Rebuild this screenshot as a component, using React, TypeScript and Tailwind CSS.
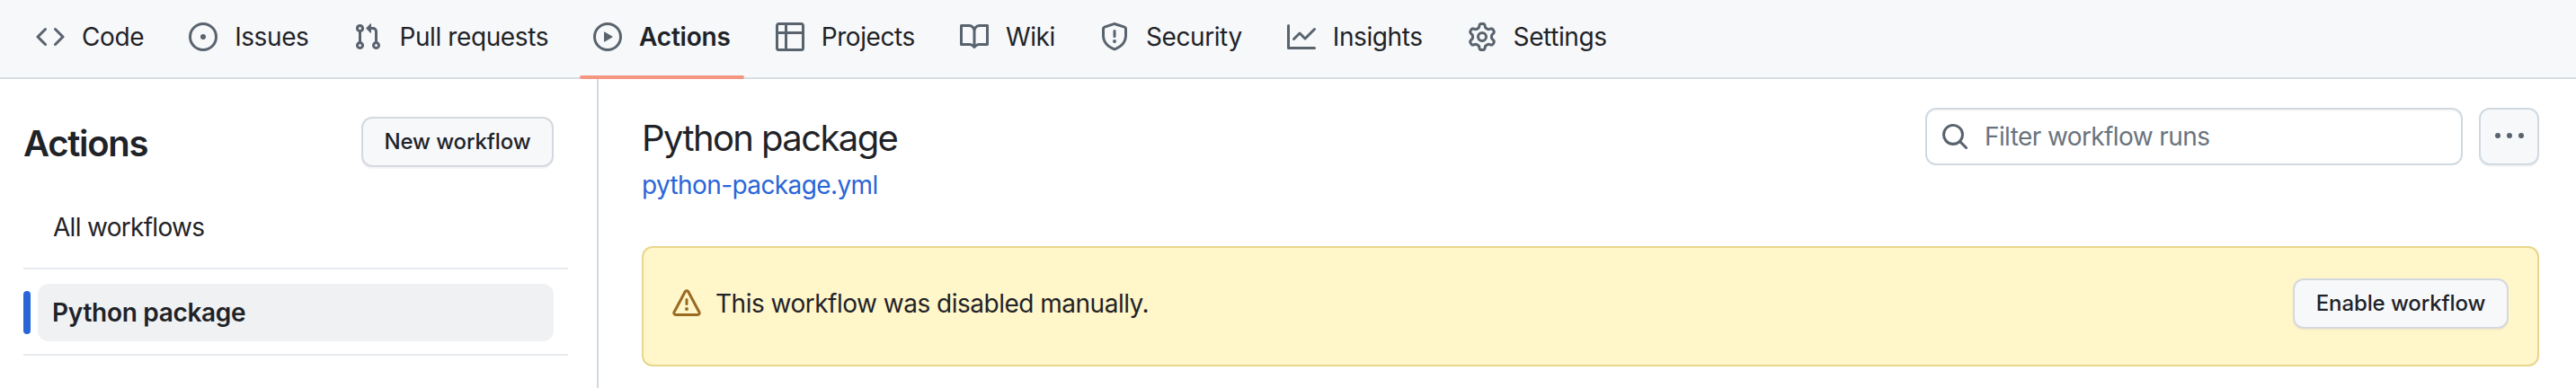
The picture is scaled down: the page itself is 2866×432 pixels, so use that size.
const P: Record<string, string> = {
  code: "m11.28 3.22 4.25 4.25a.75.75 0 0 1 0 1.06l-4.25 4.25a.749.749 0 0 1-1.275-.326.749.749 0 0 1 .215-.734L13.94 8l-3.72-3.72a.749.749 0 0 1 .326-1.275.749.749 0 0 1 .734.215Zm-6.56 0a.751.751 0 0 1 1.042.018.751.751 0 0 1 .018 1.042L2.06 8l3.72 3.72a.749.749 0 0 1-.326 1.275.749.749 0 0 1-.734-.215L.47 8.53a.75.75 0 0 1 0-1.06Z",
  issue: "M8 9.5a1.5 1.5 0 1 0 0-3 1.5 1.5 0 0 0 0 3ZM8 0a8 8 0 1 1 0 16A8 8 0 0 1 8 0ZM1.5 8a6.5 6.5 0 1 0 13 0 6.5 6.5 0 0 0-13 0Z",
  pr: "M1.5 3.25a2.25 2.25 0 1 1 3 2.122v5.256a2.251 2.251 0 1 1-1.5 0V5.372A2.25 2.25 0 0 1 1.5 3.25Zm5.677-.177L9.573.677A.25.25 0 0 1 10 .854V2.5h1A2.5 2.5 0 0 1 13.5 5v5.628a2.251 2.251 0 1 1-1.5 0V5a1 1 0 0 0-1-1h-1v1.646a.25.25 0 0 1-.427.177L7.177 3.427a.25.25 0 0 1 0-.354ZM3.75 2.5a.75.75 0 1 0 0 1.5.75.75 0 0 0 0-1.5Zm0 9.5a.75.75 0 1 0 0 1.5.75.75 0 0 0 0-1.5Zm8.25.75a.75.75 0 1 0 1.5 0 .75.75 0 0 0-1.5 0Z",
  play: "M8 0a8 8 0 1 1 0 16A8 8 0 0 1 8 0ZM1.5 8a6.5 6.5 0 1 0 13 0 6.5 6.5 0 0 0-13 0Zm4.879-2.773 4.264 2.559a.25.25 0 0 1 0 .428l-4.264 2.559A.25.25 0 0 1 6 10.559V5.442a.25.25 0 0 1 .379-.215Z",
  table: "M0 1.75C0 .784.784 0 1.75 0h12.5C15.216 0 16 .784 16 1.75v12.5A1.75 1.75 0 0 1 14.25 16H1.75A1.75 1.75 0 0 1 0 14.25ZM6.5 6.5v8h7.75a.25.25 0 0 0 .25-.25V6.5Zm8-1.5V1.75a.25.25 0 0 0-.25-.25H6.5V5Zm-13 1.5v7.75c0 .138.112.25.25.25H5v-8ZM5 5V1.5H1.75a.25.25 0 0 0-.25.25V5Z",
  book: "M0 1.75A.75.75 0 0 1 .75 1h4.253c1.227 0 2.317.59 3 1.501A3.743 3.743 0 0 1 11.006 1h4.245a.75.75 0 0 1 .75.75v10.5a.75.75 0 0 1-.75.75h-4.507a2.25 2.25 0 0 0-1.591.659l-.622.621a.75.75 0 0 1-1.06 0l-.622-.621A2.25 2.25 0 0 0 5.258 13H.75a.75.75 0 0 1-.75-.75Zm7.251 10.324.004-5.073-.002-2.253A2.25 2.25 0 0 0 5.003 2.5H1.5v9h3.757a3.75 3.75 0 0 1 1.994.574ZM8.755 4.75l-.004 7.322a3.752 3.752 0 0 1 1.992-.572H14.5v-9h-3.495a2.25 2.25 0 0 0-2.25 2.25Z",
  shield: "M7.467.133a1.748 1.748 0 0 1 1.066 0l5.25 1.68A1.75 1.75 0 0 1 15 3.48V7c0 1.566-.32 3.182-1.303 4.682-.983 1.498-2.585 2.813-5.032 3.855a1.697 1.697 0 0 1-1.33 0c-2.447-1.042-4.049-2.357-5.032-3.855C1.32 10.182 1 8.566 1 7V3.48a1.75 1.75 0 0 1 1.217-1.667Zm.61 1.429a.25.25 0 0 0-.153 0l-5.25 1.68a.25.25 0 0 0-.174.238V7c0 1.358.275 2.666 1.057 3.86.784 1.194 2.121 2.34 4.366 3.297a.196.196 0 0 0 .154 0c2.245-.956 3.582-2.104 4.366-3.298C13.225 9.666 13.5 8.36 13.5 7V3.48a.251.251 0 0 0-.174-.237l-5.25-1.68ZM8.75 4.75v3a.75.75 0 0 1-1.5 0v-3a.75.75 0 0 1 1.5 0ZM9 10.5a1 1 0 1 1-2 0 1 1 0 0 1 2 0Z",
  graph: "M1.5 1.75V13.5h13.75a.75.75 0 0 1 0 1.5H.75a.75.75 0 0 1-.75-.75V1.75a.75.75 0 0 1 1.5 0Zm14.28 2.53-5.25 5.25a.75.75 0 0 1-1.06 0L7 7.06 4.28 9.78a.751.751 0 0 1-1.042-.018.751.751 0 0 1-.018-1.042l3.25-3.25a.75.75 0 0 1 1.06 0L10 7.94l4.72-4.72a.751.751 0 0 1 1.042.018.751.751 0 0 1 .018 1.042Z",
  gear: "M8 0a8.2 8.2 0 0 1 .701.031C9.444.095 9.99.645 10.16 1.29l.288 1.107c.018.066.079.158.212.224.231.114.454.243.668.386.123.082.233.09.299.071l1.103-.303c.644-.176 1.392.021 1.82.63.27.385.506.792.704 1.218.315.675.111 1.422-.364 1.891l-.814.806c-.049.048-.098.147-.088.294.016.257.016.515 0 .772-.01.147.038.246.088.294l.814.806c.475.469.679 1.216.364 1.891a7.977 7.977 0 0 1-.704 1.217c-.428.61-1.176.807-1.82.63l-1.102-.302c-.067-.019-.177-.011-.3.071a5.909 5.909 0 0 1-.668.386c-.133.066-.194.158-.211.224l-.29 1.106c-.168.646-.715 1.196-1.458 1.26a8.006 8.006 0 0 1-1.402 0c-.743-.064-1.289-.614-1.458-1.26l-.289-1.106c-.018-.066-.079-.158-.212-.224a5.738 5.738 0 0 1-.668-.386c-.123-.082-.233-.09-.299-.071l-1.103.303c-.644.176-1.392-.021-1.82-.63a8.12 8.12 0 0 1-.704-1.218c-.315-.675-.111-1.422.363-1.891l.815-.806c.05-.048.098-.147.088-.294a6.214 6.214 0 0 1 0-.772c.01-.147-.038-.246-.088-.294l-.815-.806C.635 6.045.431 5.298.746 4.623a7.92 7.92 0 0 1 .704-1.217c.428-.61 1.176-.807 1.82-.63l1.102.302c.067.019.177.011.3-.071.214-.143.437-.272.668-.386.133-.066.194-.158.211-.224l.29-1.106C6.009.645 6.556.095 7.299.03 7.53.01 7.764 0 8 0Zm-.571 1.525c-.036.003-.108.036-.137.146l-.289 1.105c-.147.561-.549.967-.998 1.189-.173.086-.34.183-.5.29-.417.278-.97.423-1.529.27l-1.103-.303c-.109-.03-.175.016-.195.045-.22.312-.412.644-.573.99-.014.031-.021.11.059.19l.815.806c.411.406.562.957.53 1.456a4.709 4.709 0 0 0 0 .582c.032.499-.119 1.05-.53 1.456l-.815.806c-.081.08-.073.159-.059.19.162.346.353.677.573.989.02.03.085.076.195.046l1.102-.303c.56-.153 1.113-.008 1.53.27.161.107.328.204.501.29.447.222.85.629.997 1.189l.289 1.105c.029.109.101.143.137.146a6.6 6.6 0 0 0 1.142 0c.036-.003.108-.036.137-.146l.289-1.105c.147-.561.549-.967.998-1.189.173-.086.34-.183.5-.29.417-.278.97-.423 1.529-.27l1.103.303c.109.029.175-.016.195-.045.22-.313.411-.644.573-.99.014-.031.021-.11-.059-.19l-.815-.806c-.411-.406-.562-.957-.53-1.456a4.709 4.709 0 0 0 0-.582c-.032-.499.119-1.05.53-1.456l.815-.806c.081-.08.073-.159.059-.19a6.464 6.464 0 0 0-.573-.989c-.02-.03-.085-.076-.195-.046l-1.102.303c-.56.153-1.113.008-1.53-.27a4.44 4.44 0 0 0-.501-.29c-.447-.222-.85-.629-.997-1.189l-.289-1.105c-.029-.11-.101-.143-.137-.146a6.6 6.6 0 0 0-1.142 0ZM11 8a3 3 0 1 1-6 0 3 3 0 0 1 6 0ZM9.5 8a1.5 1.5 0 1 0-3.001.001A1.5 1.5 0 0 0 9.5 8Z",
  search: "M10.68 11.74a6 6 0 0 1-7.922-8.982 6 6 0 0 1 8.982 7.922l3.04 3.04a.749.749 0 0 1-.326 1.275.749.749 0 0 1-.734-.215ZM11.5 7a4.499 4.499 0 1 0-8.997 0A4.499 4.499 0 0 0 11.5 7Z",
  alert: "M6.457 1.047c.659-1.234 2.427-1.234 3.086 0l6.082 11.378A1.75 1.75 0 0 1 14.082 15H1.918a1.75 1.75 0 0 1-1.543-2.575Zm1.763.707a.25.25 0 0 0-.44 0L1.698 13.132a.25.25 0 0 0 .22.368h12.164a.25.25 0 0 0 .22-.368Zm.53 3.996v2.5a.75.75 0 0 1-1.5 0v-2.5a.75.75 0 0 1 1.5 0ZM9 11a1 1 0 1 1-2 0 1 1 0 0 1 2 0Z",
  kebab: "M8 9a1.5 1.5 0 1 0 0-3 1.5 1.5 0 0 0 0 3ZM1.5 9a1.5 1.5 0 1 0 0-3 1.5 1.5 0 0 0 0 3Zm13 0a1.5 1.5 0 1 0 0-3 1.5 1.5 0 0 0 0 3Z",
};

function Icon({ name, className }: { name: string; className?: string }) {
  return (
    <svg viewBox="0 0 16 16" fill="currentColor" className={className} aria-hidden="true">
      <path d={P[name]} />
    </svg>
  );
}

const tabs = [
  { icon: "code", label: "Code" },
  { icon: "issue", label: "Issues" },
  { icon: "pr", label: "Pull requests" },
  { icon: "play", label: "Actions", active: true },
  { icon: "table", label: "Projects" },
  { icon: "book", label: "Wiki" },
  { icon: "shield", label: "Security" },
  { icon: "graph", label: "Insights" },
  { icon: "gear", label: "Settings" },
];

function Tab({ icon, label, active }: { icon: string; label: string; active?: boolean }) {
  return (
    <a
      className={
        "relative flex h-[88px] items-center gap-[19px] px-[15px] pb-[6px] text-[28px] text-[#1f2328] " +
        (active ? "font-semibold tracking-[-0.2px]" : "font-normal tracking-[-0.4px]")
      }
    >
      <Icon name={icon} className="h-8 w-8 shrink-0 text-[#59636e]" />
      <span>{label}</span>
      {active && <span className="absolute inset-x-0 bottom-0 h-1 rounded-sm bg-[#f59681]" />}
    </a>
  );
}

const btn =
  "flex h-14 items-center justify-center rounded-xl border-2 border-[#d5d8de] bg-[#f6f8fa] text-[24px] font-medium tracking-[-0.1px] text-[#1f2328] shadow-[0_2px_0_rgba(31,35,40,0.04)]";

export default function App() {
  return (
    <div className="flex h-[432px] w-[2866px] flex-col overflow-hidden bg-white font-['Inter',sans-serif] text-[#1f2328]">
      <nav className="flex h-[88px] shrink-0 gap-[20px] border-b-2 border-[#d8dee4] bg-[#f6f8fa] pl-[25px]">
        {tabs.map((t) => (
          <Tab key={t.label} {...t} />
        ))}
      </nav>

      <div className="flex min-h-0 flex-1">
        <aside className="w-[666px] shrink-0 border-r-2 border-[#d1d9e0] pl-[26px] pr-[32px]">
          <div className="flex items-center justify-between pr-4 pt-[42px]">
            <h2 className="pt-[4px] text-[40px] font-semibold leading-[52px] tracking-[-1.3px]">Actions</h2>
            <button className={btn + " w-[214px]"}>New workflow</button>
          </div>
          <div className="mt-[22px] flex h-[92px] items-center border-b-2 border-[#e6eaef] pl-[33px] text-[28px] tracking-[-0.7px]">
            All workflows
          </div>
          <div className="flex h-24 items-center gap-2 border-b-2 border-[#e6eaef] pr-4 pt-[2px]">
            <span className="h-12 w-2 rounded-md bg-[#2a65d8]" />
            <div className="flex h-16 flex-1 items-center rounded-xl bg-[#eff1f3] pl-4 text-[28px] font-semibold tracking-[-0.3px]">
              Python package
            </div>
          </div>
        </aside>

        <main className="min-w-0 flex-1 pl-[48px] pr-[41px]">
          <div className="flex items-start justify-between pt-8">
            <div>
              <h1 className="mt-[6px] text-[40px] font-normal leading-[56px] tracking-[-1.6px]">Python package</h1>
              <a className="mt-[4px] block text-[28px] leading-[40px] tracking-[-0.6px] text-[#2a65d8]">python-package.yml</a>
            </div>
            <div className="flex gap-[18px]">
              <label className="flex h-16 w-[598px] items-center gap-[17px] rounded-xl border-2 border-[#d1d9e0] bg-white pl-[15px] shadow-[inset_0_2px_0_rgba(31,35,40,0.03)]">
                <Icon name="search" className="h-8 w-8 shrink-0 text-[#59636e]" />
                <input
                  className="min-w-0 flex-1 bg-transparent text-[28px] tracking-[-0.6px] outline-none placeholder:text-[#6a737d]"
                  placeholder="Filter workflow runs"
                />
              </label>
              <button className="flex h-16 w-[67px] items-center justify-center rounded-xl border-2 border-[#d1d9e0] bg-[#f6f8fa] text-[#59636e] shadow-[0_2px_0_rgba(31,35,40,0.04)]">
                <Icon name="kebab" className="h-8 w-8" />
              </button>
            </div>
          </div>

          <div className="mt-[48px] flex h-[134px] items-center justify-between rounded-xl border-2 border-[#e8d68d] bg-[#fff6c9] pb-[6px] pl-8 pr-8">
            <div className="flex items-center gap-4 text-[28px] tracking-[-0.5px]">
              <Icon name="alert" className="h-8 w-8 text-[#9a6a22]" />
              <span>This workflow was disabled manually.</span>
            </div>
            <button className={btn + " w-[240px]"}>Enable workflow</button>
          </div>
        </main>
      </div>
    </div>
  );
}
